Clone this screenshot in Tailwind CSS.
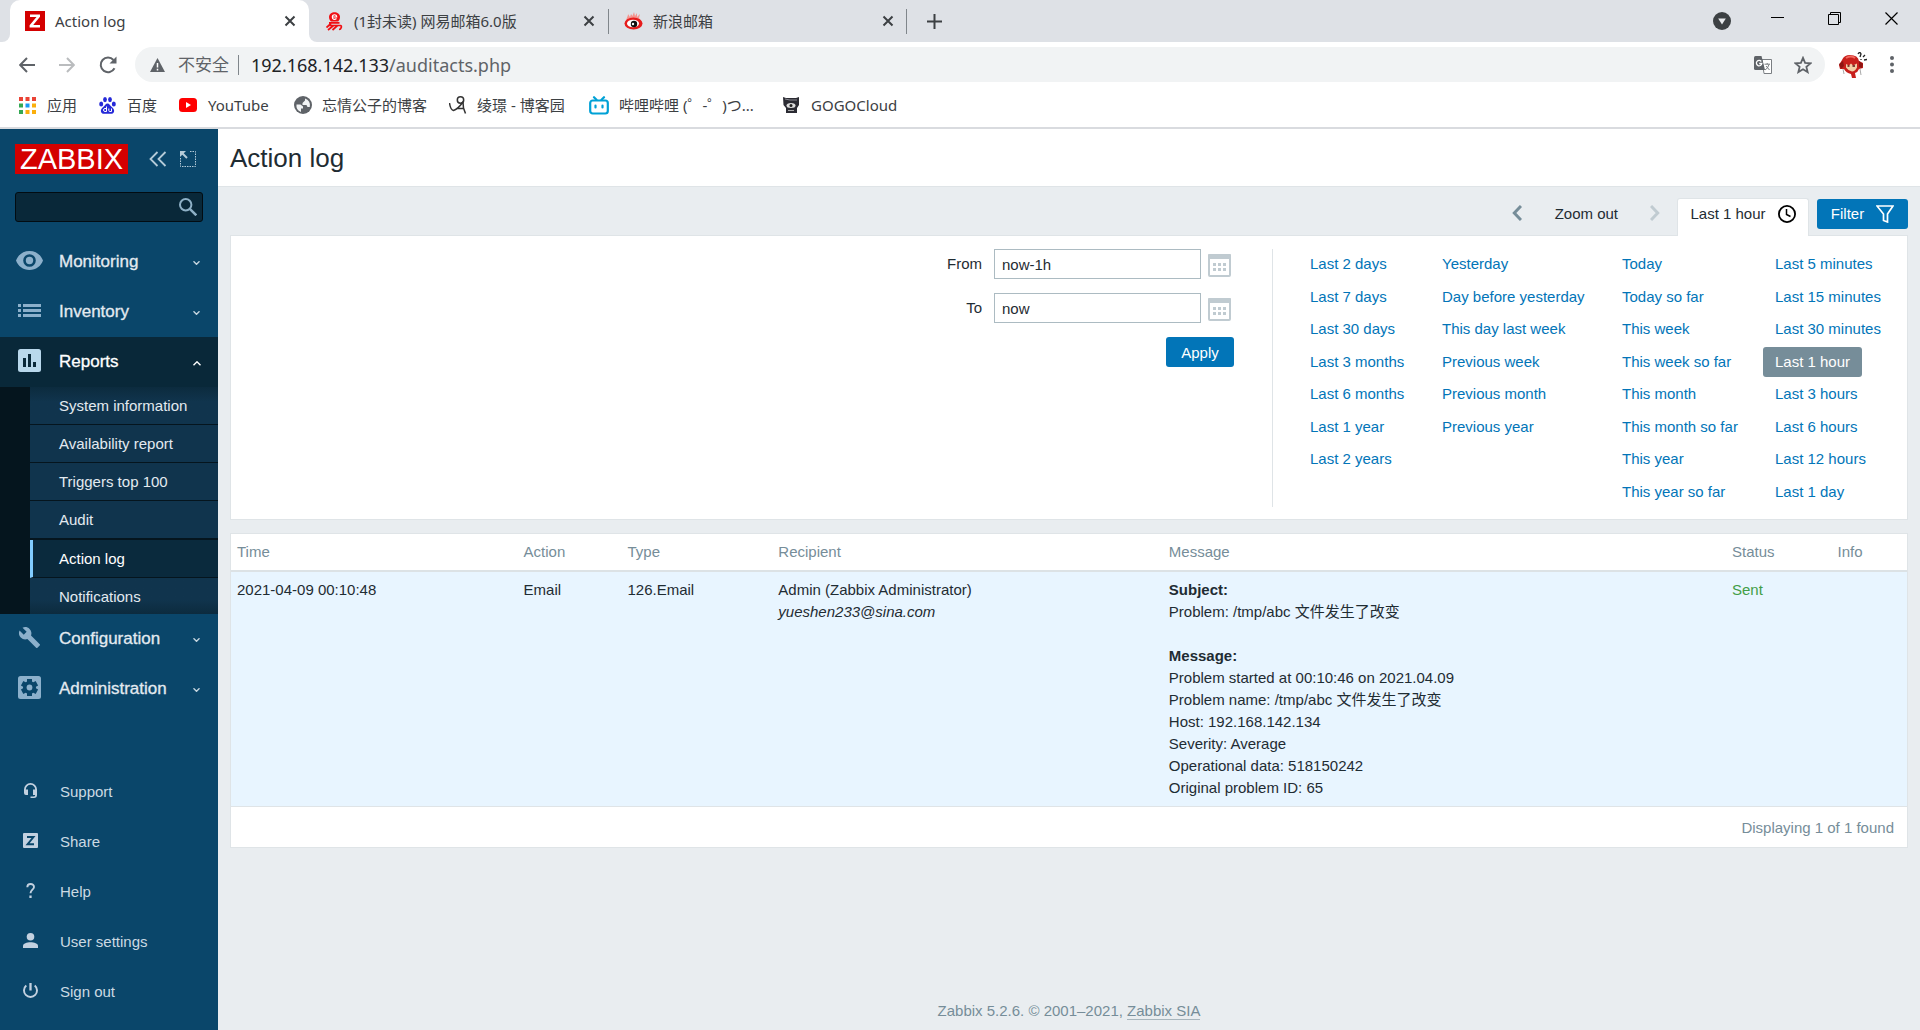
<!DOCTYPE html>
<html lang="zh-CN">

<head>
    <meta charset="UTF-8">
    <meta name="viewport" content="width=device-width, initial-scale=1.0">
    <title>Action log</title>
    <script src="https://cdn.jsdelivr.net/npm/@tailwindcss/browser@4"></script>
</head>

<body class="min-h-screen flex flex-col bg-[#e9edf0] text-[15px] text-[#1f2c33] font-['Liberation_Sans','Noto_Sans_CJK_SC',sans-serif]">

    <!-- Browser window -->
    <header class="text-[#3c4043] font-['Noto_Sans','Noto_Sans_CJK_SC',sans-serif] border-b-2 border-[#d9dbdf] bg-white">
        <div class="h-[42px] bg-[#dee1e6] flex items-start pl-[10px]">
            <div class="relative w-[299px] h-[42px] bg-white rounded-t-[10px] flex items-center pl-[15px] pr-[13px]">
                <span class="absolute -left-2 bottom-0 size-2 bg-white"><span class="block size-2 bg-[#dee1e6] rounded-br-lg"></span></span>
                <span class="absolute -right-2 bottom-0 size-2 bg-white"><span class="block size-2 bg-[#dee1e6] rounded-bl-lg"></span></span>
                <svg class="size-5 mr-[10px]" viewBox="0 0 20 20"><rect width="20" height="20" fill="#d40000"/><path d="M5 3.500h10v2.300L8.200 14H15v2.500H4.600v-2.300L11.500 6H5z" fill="#fff"/></svg>
                <span class="flex-1">Action log</span>
                <button aria-label="Close tab"><svg class="size-3" viewBox="0 0 12 12" stroke="#3c4043" stroke-width="2"><path d="M1.500 1.500l9 9M10.500 1.500l-9 9"/></svg></button>
            </div>
            <div class="w-[299px] h-[42px] flex items-center pl-[17px] pr-[13px]">
                <svg class="w-[17px] h-[19px] mr-[11px]" viewBox="0 0 17 19" fill="none" stroke="#f00f14">
                    <path d="M3 5C3-1.500 14-1.500 14 5c0 2-1 4-2 4.500H5C4 9 3 7 3 5z" fill="#f00f14" stroke="none"/>
                    <path d="M6.300 5h4.400c0-3-4.400-3-4.400 0s3 2.600 4.200 1.500" stroke="#fff" stroke-width="1.200"/>
                    <path d="M3 10.800h10.500M2 13.500h12.500c1.500 0 1 4-1.500 4M5 11.500L.5 15.500M7.500 13.500L2 18M11.500 13.500L6.500 18" stroke-width="1.700"/>
                </svg>
                <span class="flex-1">(1封未读) 网易邮箱6.0版</span>
                <button aria-label="Close tab"><svg class="size-3" viewBox="0 0 12 12" stroke="#3c4043" stroke-width="2"><path d="M1.500 1.500l9 9M10.500 1.500l-9 9"/></svg></button>
            </div>
            <div class="w-[299px] h-[42px] flex items-center relative pl-[16px] pr-[13px]">
                <span class="absolute left-0 top-[9px] h-[25px] w-px bg-[#80868b]"></span>
                <svg class="w-[19px] h-[18px] mr-[10px]" viewBox="0 0 19 18">
                    <path d="M2 9C3 5 4 4 4 2l2 3 1-3 1.500 2L10 0l1 4 2-3v4l3-3-1 4 2 3z" fill="#f5948f"/>
                    <ellipse cx="9.500" cy="11.500" rx="9" ry="6" fill="#e61c1c"/>
                    <ellipse cx="9" cy="11.500" rx="6" ry="3.800" fill="#fff"/>
                    <circle cx="10" cy="12" r="3.200" fill="#111"/><circle cx="9" cy="12" r="1.200" fill="#fff"/>
                </svg>
                <span class="flex-1">新浪邮箱</span>
                <button aria-label="Close tab"><svg class="size-3" viewBox="0 0 12 12" stroke="#3c4043" stroke-width="2"><path d="M1.500 1.500l9 9M10.500 1.500l-9 9"/></svg></button>
                <span class="absolute right-0 top-[9px] h-[25px] w-px bg-[#80868b]"></span>
            </div>
            <button aria-label="New tab" class="h-[42px] pl-5"><svg class="size-[15px]" viewBox="0 0 15 15" stroke="#3c4043" stroke-width="2"><path d="M7.500 0v15M0 7.500h15"/></svg></button>
            <div class="ml-auto flex h-[42px] items-start">
                <button aria-label="Tab search" class="h-[42px] mr-[18px]"><svg class="size-[18px]" viewBox="0 0 18 18"><circle cx="9" cy="9" r="9" fill="#3c4043"/><path d="M5.200 6.500h7.600L9 12.500z" fill="#e8eaed"/></svg></button>
                <button aria-label="Minimize" class="w-[57px] h-[37px] flex items-center justify-center"><svg class="size-[13px]" viewBox="0 0 13 13" stroke="#000"><path d="M0 5.500h13"/></svg></button>
                <button aria-label="Restore" class="w-[57px] h-[37px] flex items-center justify-center"><svg class="size-[13px]" viewBox="0 0 13 13" stroke="#000" fill="none"><path d="M.5 2.500h10v10H.5zM2.500 2.500V.5h10v10h-2"/></svg></button>
                <button aria-label="Close" class="w-[57px] h-[37px] flex items-center justify-center"><svg class="size-[13px]" viewBox="0 0 13 13" stroke="#000" stroke-width="1.200"><path d="M.5.5l12 12M12.500.5l-12 12"/></svg></button>
            </div>
        </div>

        <div class="h-[45px] flex items-center pl-[19px] pr-[26px]">
            <button aria-label="Back" class="mr-6"><svg class="size-4" viewBox="0 0 16 16" fill="none" stroke="#5f6368" stroke-width="2"><path d="M16 8H1.500M8 1L1.200 8 8 15"/></svg></button>
            <button aria-label="Forward" class="mr-6"><svg class="size-4" viewBox="0 0 16 16" fill="none" stroke="#babcbe" stroke-width="2"><path d="M0 8h14.500M8 1l6.800 7L8 15"/></svg></button>
            <button aria-label="Reload" class="mr-[18px]"><svg class="size-[18px]" viewBox="0 0 18 18" fill="none" stroke="#5f6368" stroke-width="2"><path d="M15.500 12.200A7.300 7.300 0 1 1 14.500 4"/><path d="M17.500.5v7h-7z" fill="#5f6368" stroke="none"/></svg></button>
            <div class="flex-1 h-[35px] rounded-full bg-[#f1f3f4] flex items-center pl-[15px] pr-[13px]">
                <svg class="w-[15px] h-[14px] mr-[13px]" viewBox="0 0 15 14"><path d="M7.500 0L15 14H0z" fill="#5f6368"/><path d="M7.500 5v4.500M7.500 10.800v1.700" stroke="#fff" stroke-width="1.500"/></svg>
                <span class="text-[17px] text-[#5f6368]">不安全</span>
                <span class="w-px h-5 bg-[#80868b] ml-[9px] mr-3"></span>
                <div role="textbox" aria-label="Address" contenteditable="true" spellcheck="false" class="flex-1 text-[18px] leading-6 text-[#202124]">192.168.142.133<span class="text-[#5f6368]">/auditacts.php</span></div>
                <button aria-label="Translate" class="mr-[22px]">
                    <svg class="size-[18px]" viewBox="0 0 18 18"><path d="M8 3.500h9.500v14H10z" fill="#fff" stroke="#7a7e82"/><path d="M0 1.500Q0 0 1.500 0h6L11 14H1.500Q0 14 0 12.500z" fill="#5f6368"/><path d="M7.300 5.500A2.700 2.700 0 1 0 7.800 7.500H5.200" fill="none" stroke="#fff" stroke-width="1.300"/><path d="M10.500 8.200H16M13.200 7v1.200M15 8.500q-1 4-4 5.500M12 10l3.500 4" fill="none" stroke="#7a7e82"/></svg>
                </button>
                <button aria-label="Bookmark"><svg class="size-[18px]" viewBox="0 0 24 24" fill="none" stroke="#5f6368" stroke-width="2.400"><path d="M12 2.500l2.800 6.700 7.200.6-5.500 4.700 1.700 7L12 17.700l-6.200 3.800 1.700-7L2 9.800l7.200-.6z"/></svg></button>
            </div>
            <button aria-label="Profile" class="ml-[14px] mr-[23px]">
                <svg class="w-7 h-[26px]" viewBox="0 0 28 26">
                    <path d="M3 8q2-5 8-5 8 0 9 6l4 2v5l-4 1q-1 3-4 4l1 5h-4l-1-4q-5-1-7-5l-4 0-1-4z" fill="#c8201c"/>
                    <path d="M0 12l4-3 1 5-3 3zM20 9l4 3-1 4-3-1z" fill="#8f1512"/>
                    <path d="M7 6q5-3 9 0" stroke="#f26a60" stroke-width="2" fill="none"/>
                    <path d="M7 12l3 1.500 2-2 2 2 4-2v4q-2 4-5 4-4-1-6-4z" fill="#f3cfa6"/>
                    <path d="M8.500 14h2M13.500 14h2.500" stroke="#5a1010" stroke-width="1.500"/>
                    <path d="M4 17l1 5M21 17l1 6" stroke="#aaa" fill="none"/>
                    <path d="M19 2q2-3 3 0l-1 3M24 5l2-2M25 8l3-.5M22 7v1" stroke="#222" stroke-width="1.300" fill="none"/>
                </svg>
            </button>
            <button aria-label="Menu"><svg class="w-1 h-[17px]" viewBox="0 0 4 17" fill="#5f6368"><circle cx="2" cy="2" r="2"/><circle cx="2" cy="8.500" r="2"/><circle cx="2" cy="15" r="2"/></svg></button>
        </div>

        <nav class="h-10 pb-1 pl-[19px] flex items-center gap-[22px]">
            <a href="#" class="flex items-center gap-[11px]">
                <svg class="size-[17px]" viewBox="0 0 17 17"><path d="M0 0h4v4H0zM6.500 0h4v4h-4zM13 0h4v4h-4z" fill="#ea4335"/><path d="M0 6.500h4v4H0zM0 13h4v4H0z" fill="#34a853"/><path d="M6.500 6.500h4v4h-4z" fill="#1a9af5"/><path d="M13 6.500h4v4h-4zM6.500 13h4v4h-4zM13 13h4v4h-4z" fill="#fbaf0c"/></svg>
                应用
            </a>
            <a href="#" class="flex items-center gap-[11px]">
                <svg class="size-[17px]" viewBox="0 0 17 17" fill="#2529d8"><ellipse cx="2.200" cy="7" rx="2" ry="2.500"/><ellipse cx="6" cy="2.600" rx="1.900" ry="2.600"/><ellipse cx="11" cy="2.600" rx="1.900" ry="2.600"/><ellipse cx="14.800" cy="7" rx="2" ry="2.500"/><path d="M8.500 6.500c2 0 2.500 2 4 3.200 2 1.500 3 3 2.500 5-.6 2.500-3 2.300-6.500 2-3.500.3-5.900.5-6.500-2-.5-2 .5-3.500 2.500-5 1.500-1.200 2-3.200 4-3.200z"/><path d="M7.500 9.500v5H6a1.300 1.300 0 0 1 0-3h1.500M9.800 11.500v2q0 1 1 1h1.700v-3" fill="none" stroke="#fff"/></svg>
                百度
            </a>
            <a href="#" class="min-w-[93px] flex items-center gap-[11px]">
                <svg class="w-[18px] h-[14px]" viewBox="0 0 18 14"><rect width="18" height="14" rx="3.500" fill="#f00"/><path d="M7 4l5 3-5 3z" fill="#fff"/></svg>
                YouTube
            </a>
            <a href="#" class="flex items-center gap-[10px]">
                <svg class="size-[18px]" viewBox="0 0 18 18"><circle cx="9" cy="9" r="9" fill="#5f6368"/><path d="M2.500 8.500h4l2.500 2v2H7v3.500A7 7 0 0 1 2.500 8.500zM11 2.500v2L8.500 7v2h4l1 2h2.300A7 7 0 0 0 11 2.500z" fill="#f1f3f4"/></svg>
                忘情公子的博客
            </a>
            <a href="#" class="min-w-[118px] flex items-center gap-[10px]">
                <svg class="size-[18px]" viewBox="0 0 18 18" fill="none" stroke="#333" stroke-width="1.500"><circle cx="11.500" cy="4" r="3.200"/><path d="M.5 7q1 7 4 7.500 4-1 9.500-8.500l.5 6 2 5.500M8 12.500h6"/></svg>
                绫璟 - 博客园
            </a>
            <a href="#" class="min-w-[171px] flex items-center gap-[10px]">
                <svg class="w-5 h-[19px]" viewBox="0 0 20 19" fill="none" stroke="#00a1d6" stroke-width="2.200" stroke-linecap="round"><rect x="1.200" y="4.500" width="17.600" height="13" rx="2.500"/><path d="M5 1.200l2.500 2.600M15 1.200l-2.500 2.600M6.500 9.500v2M13.500 9.500v2"/></svg>
                哔哩哔哩 (゜-゜)つ...
            </a>
            <a href="#" class="flex items-center gap-[11px]">
                <svg class="size-[18px]" viewBox="0 0 18 18"><path d="M1 1l3 1h10l3-1v8l-2 3v5H4v-5L1.500 9z" fill="#2b2b33"/><path d="M3 3l5 1h7" stroke="#8a8a92" fill="none"/><ellipse cx="9" cy="9.500" rx="4.500" ry="2.500" fill="#ddd"/><circle cx="9" cy="9.500" r="1.500" fill="#222"/><path d="M6 14.500h6" stroke="#aaa"/></svg>
                GOGOCloud
            </a>
        </nav>
    </header>

    <div class="flex-1 flex">
        <!-- Sidebar -->
        <aside class="w-[218px] shrink-0 bg-[#0a466a] text-[#e3eaf0] flex flex-col pb-[13px]">
            <div class="flex items-center pl-[15px] pt-[15px]">
                <a href="#" class="bg-[#d40000] text-white w-[113px] h-[30px] text-[29px] leading-[30px] text-center">ZABBIX</a>
                <button aria-label="Collapse sidebar" class="ml-[21px]"><svg class="w-[18px] h-4" viewBox="0 0 18 16" fill="none" stroke="#b5cbd8" stroke-width="1.800"><path d="M8.500 1l-7 7 7 7M16.500 1l-7 7 7 7"/></svg></button>
                <button aria-label="Hide sidebar" class="ml-[13px]"><svg class="size-4" viewBox="0 0 16 16" fill="none" stroke="#b5cbd8"><path d="M.5 7v8.500h15V.5H9" stroke-dasharray="1.500 1"/><path d="M1 1l6 6" stroke-width="2"/><path d="M0 0h6L0 6z" fill="#b5cbd8" stroke="none"/></svg></button>
            </div>
            <div class="relative mx-[15px] mt-[18px] mb-[15px]">
                <input type="text" aria-label="Search" class="block w-full h-[30px] rounded-[3px] bg-[#092839] border border-[#020c12] pl-2 pr-9">
                <button aria-label="Run search" class="absolute right-[6px] top-[6px]"><svg class="size-[18px]" viewBox="0 0 18 18" fill="none" stroke="#8eb0c6" stroke-width="2"><circle cx="6.700" cy="6.700" r="5.700"/><path d="M10.800 10.800l6.500 6.500" stroke-width="2.500"/></svg></button>
            </div>

            <nav>
                <a href="#" class="h-[50px] flex items-center pl-4 pr-[18px] text-[17px] [-webkit-text-stroke:0.3px]">
                    <svg class="w-[27px] h-5 mr-4 mb-[3px]" viewBox="0 0 27 20" fill="#8cb0cb"><path fill-rule="evenodd" d="M13.500 0C7 0 2 4 0 9.500 2 15 7 19 13.500 19S25 15 27 9.500C25 4 20 0 13.500 0zm0 15.800a6.300 6.300 0 1 1 0-12.600 6.300 6.300 0 0 1 0 12.600z"/><circle cx="13.500" cy="9.500" r="3.700"/></svg>
                    <span class="flex-1">Monitoring</span>
                    <svg class="w-[7px] h-1 mt-0.5" viewBox="0 0 7 4" fill="none" stroke="#c5d5df" stroke-width="1.400"><path d="M.5.300l3 3 3-3"/></svg>
                </a>
                <a href="#" class="h-[50px] flex items-center pl-[18px] pr-[18px] text-[17px] [-webkit-text-stroke:0.3px]">
                    <svg class="w-[23px] h-[13px] mr-[18px] mb-[3px]" viewBox="0 0 23 13" fill="#8cb0cb"><path d="M0 0h3v3H0zM5 0h18v3H5zM0 5h3v3H0zM5 5h18v3H5zM0 10h3v3H0zM5 10h18v3H5z"/></svg>
                    <span class="flex-1">Inventory</span>
                    <svg class="w-[7px] h-1 mt-0.5" viewBox="0 0 7 4" fill="none" stroke="#c5d5df" stroke-width="1.400"><path d="M.5.300l3 3 3-3"/></svg>
                </a>
                <a href="#" class="h-[50px] flex items-center pl-[18px] pr-[17px] text-[17px] text-white bg-[#092839] [-webkit-text-stroke:0.3px]">
                    <svg class="size-[23px] mr-[18px] mb-[3px]" viewBox="0 0 23 23"><rect width="23" height="23" rx="2.500" fill="#b9d8ec"/><path d="M5 9h3v9H5zM10 5h3v13h-3zM15 13h3v5h-3z" fill="#092839"/></svg>
                    <span class="flex-1">Reports</span>
                    <svg class="w-2 h-[5px] mt-0.5" viewBox="0 0 8 5" fill="none" stroke="#fff" stroke-width="1.400"><path d="M.5 4.200l3.500-3.400 3.500 3.400"/></svg>
                </a>
                <div class="bg-[#05151e] pl-[30px]">
                    <a href="#" class="h-[38px] flex items-center pt-0.5 pl-[29px] bg-linear-to-b from-[#0c2b3e] to-[#10344d] to-40% border-b border-[#05151e]">System information</a>
                    <a href="#" class="h-[38px] flex items-center pt-0.5 pl-[29px] bg-[#10344d] border-b border-[#05151e]">Availability report</a>
                    <a href="#" class="h-[38px] flex items-center pt-0.5 pl-[29px] bg-[#10344d] border-b border-[#05151e]">Triggers top 100</a>
                    <a href="#" class="h-[39px] flex items-center pt-0.5 pl-[29px] bg-[#10344d] border-b-2 border-[#05151e]">Audit</a>
                    <a href="#" class="h-[38px] flex items-center pt-0.5 pl-[26px] text-white bg-[#0a2a3d] border-l-[3px] border-l-[#81ccff] border-b border-b-[#05151e]">Action log</a>
                    <a href="#" class="h-9 flex items-center pt-0.5 pl-[29px] bg-linear-to-t from-[#0c2b3e] to-[#10344d] to-40%">Notifications</a>
                </div>
                <a href="#" class="h-[50px] flex items-center pl-[18px] pr-[18px] text-[17px] [-webkit-text-stroke:0.3px]">
                    <svg class="size-[23px] mr-[18px] mb-[3px]" viewBox="0 0 24 24" fill="#8cb0cb"><path d="M22.700 19l-9.100-9.100c.9-2.300.4-5-1.500-6.900-2-2-5-2.400-7.400-1.300L9 6 6 9 1.600 4.700C.4 7.100.9 10.100 2.900 12.100c1.900 1.900 4.600 2.400 6.900 1.500l9.100 9.100c.4.400 1 .4 1.400 0l2.300-2.300c.5-.4.500-1.100.1-1.400z"/></svg>
                    <span class="flex-1">Configuration</span>
                    <svg class="w-[7px] h-1 mt-0.5" viewBox="0 0 7 4" fill="none" stroke="#c5d5df" stroke-width="1.400"><path d="M.5.300l3 3 3-3"/></svg>
                </a>
                <a href="#" class="h-[50px] flex items-center pl-[18px] pr-[18px] text-[17px] [-webkit-text-stroke:0.3px]">
                    <svg class="size-[23px] mr-[18px] mb-[3px]" viewBox="0 0 23 23"><rect width="23" height="23" rx="2.500" fill="#8cb0cb"/><g fill="#0a466a"><circle cx="11.500" cy="11.500" r="6.500"/><path d="M9 3h5v17H9z"/><path d="M9 3h5v17H9z" transform="rotate(60 11.500 11.500)"/><path d="M9 3h5v17H9z" transform="rotate(120 11.500 11.500)"/></g><circle cx="11.500" cy="11.500" r="2.900" fill="#8cb0cb"/></svg>
                    <span class="flex-1">Administration</span>
                    <svg class="w-[7px] h-1 mt-0.5" viewBox="0 0 7 4" fill="none" stroke="#c5d5df" stroke-width="1.400"><path d="M.5.300l3 3 3-3"/></svg>
                </a>
            </nav>

            <nav class="mt-auto text-[#ccdae3]">
                <a href="#" class="h-[50px] flex items-center pl-[23px] gap-[22px]">
                    <svg class="size-[15px] mb-[3px]" viewBox="0 0 15 15" fill="#c3d1e0"><path d="M7.500 0A6.500 6.500 0 0 0 1 6.500V10q0 2 2 2h2V6.500H2.800a4.700 4.700 0 0 1 9.400 0H10V12h2.200q0 1.500-1.700 1.500H7.500V15H11q3 0 3-3V6.500A6.500 6.500 0 0 0 7.500 0z"/></svg>
                    Support
                </a>
                <a href="#" class="h-[50px] flex items-center pl-[23px] gap-[22px]">
                    <svg class="size-[15px] mb-[3px]" viewBox="0 0 15 15"><rect width="15" height="15" rx="1" fill="#c3d1e0"/><path d="M4 4h6.500L4.500 11.300H11" fill="none" stroke="#0a466a" stroke-width="1.900"/></svg>
                    Share
                </a>
                <a href="#" class="h-[50px] flex items-center pl-[23px] gap-[22px]">
                    <svg class="size-[15px] mb-[3px]" viewBox="0 0 15 15" fill="none" stroke="#c3d1e0" stroke-width="1.900"><path d="M4.300 4.300C4.300 0 11 0 11 4c0 2.500-3.500 3-3.500 6.300"/><path d="M7.500 12.500v2.500" stroke-width="2.300"/></svg>
                    Help
                </a>
                <a href="#" class="h-[50px] flex items-center pl-[23px] gap-[22px]">
                    <svg class="size-[15px] mb-[3px]" viewBox="0 0 15 15" fill="#c3d1e0"><circle cx="7.500" cy="3.800" r="3.800"/><path d="M0 15v-2c0-5 15-5 15 0v2z"/></svg>
                    User settings
                </a>
                <a href="#" class="h-[50px] flex items-center pl-[23px] gap-[22px]">
                    <svg class="size-[15px] mb-[3px]" viewBox="0 0 15 15" fill="none" stroke="#c3d1e0" stroke-width="1.900"><path d="M7.500 0v7.500" stroke-width="2.300"/><path d="M3.300 2.500a6.500 6.500 0 1 0 8.400 0"/></svg>
                    Sign out
                </a>
            </nav>
        </aside>

        <!-- Page -->
        <main class="flex-1 min-w-0 flex flex-col">
            <div class="h-[58px] bg-white border-b border-[#dfe4e7] px-3 pt-0.5 flex items-center">
                <h1 class="text-[26px]">Action log</h1>
            </div>

            <div class="px-3 pt-[11px]">
                <div class="flex justify-end items-start h-[37px]">
                    <button aria-label="Previous period" class="h-[30px] mr-[33px]"><svg class="w-[10px] h-4" viewBox="0 0 10 16" fill="none" stroke="#768d99" stroke-width="3"><path d="M9 1L2.300 8 9 15"/></svg></button>
                    <button class="h-[33px] mr-8">Zoom out</button>
                    <button aria-label="Next period" class="h-[30px] mr-[17px]"><svg class="w-[10px] h-4" viewBox="0 0 10 16" fill="none" stroke="#c0cbd1" stroke-width="3"><path d="M1 1l6.700 7L1 15"/></svg></button>
                    <button class="relative w-[132px] h-[38px] pb-[6px] bg-white border border-b-0 border-[#dfe4e7] rounded-t-[3px] flex items-center justify-center gap-3">
                        Last 1 hour
                        <svg class="size-[18px] mb-0.5" viewBox="0 0 18 18" fill="none" stroke="#000" stroke-width="1.800"><circle cx="9" cy="9" r="8.100"/><path d="M8.500 4v5.500l4 2" stroke-width="1.500"/></svg>
                    </button>
                    <button class="ml-2 mt-px w-[91px] h-[30px] bg-[#0275b8] text-white rounded-[3px] flex items-center justify-center gap-3">
                        Filter
                        <svg class="size-[18px]" viewBox="0 0 18 18" fill="none" stroke="#fff" stroke-width="1.700"><path d="M1 1h16l-5.500 8v8l-4-1.500V9z"/></svg>
                    </button>
                </div>

                <section class="bg-white border border-[#dfe4e7] pt-[13px] pb-3 flex justify-end">
                    <form class="flex flex-col items-end gap-[14px] pr-[38px]">
                        <div class="flex items-center pr-[3px]">
                            <label for="from" class="mr-3">From</label>
                            <input id="from" type="text" value="now-1h" class="w-[207px] h-[30px] border border-[#acbbc2] px-[7px] mr-[7px]">
                            <button type="button" aria-label="From calendar"><svg class="w-[23px] h-[23px] mt-[3px]" viewBox="0 0 23 23"><rect x="1" y="1" width="21" height="21" rx="1" fill="#fff" stroke="#c0cbd1" stroke-width="2"/><path d="M0 1q0-1 1-1h21q1 0 1 1v4H0z" fill="#c0cbd1"/><path d="M5 9h3v3H5zM10 9h3v3h-3zM15 9h3v3h-3zM5 14h3v3H5zM10 14h3v3h-3zM15 14h3v3h-3z" fill="#c0cbd1"/></svg></button>
                        </div>
                        <div class="flex items-center pr-[3px]">
                            <label for="to" class="mr-3">To</label>
                            <input id="to" type="text" value="now" class="w-[207px] h-[30px] border border-[#acbbc2] px-[7px] mr-[7px]">
                            <button type="button" aria-label="To calendar"><svg class="w-[23px] h-[23px] mt-[3px]" viewBox="0 0 23 23"><rect x="1" y="1" width="21" height="21" rx="1" fill="#fff" stroke="#c0cbd1" stroke-width="2"/><path d="M0 1q0-1 1-1h21q1 0 1 1v4H0z" fill="#c0cbd1"/><path d="M5 9h3v3H5zM10 9h3v3h-3zM15 9h3v3h-3zM5 14h3v3H5zM10 14h3v3h-3zM15 14h3v3h-3z" fill="#c0cbd1"/></svg></button>
                        </div>
                        <button type="button" class="w-[68px] h-[30px] pt-0.5 bg-[#0275b8] text-white rounded-[3px]">Apply</button>
                    </form>

                    <div class="flex border-l border-[#dfe4e7] pl-[25px] pr-[14px] text-[#0275b8]">
                        <div class="w-[132px] h-[258px] grid grid-rows-8 gap-y-0.5 items-center">
                            <a href="#" class="px-3">Last 2 days</a>
                            <a href="#" class="px-3">Last 7 days</a>
                            <a href="#" class="px-3">Last 30 days</a>
                            <a href="#" class="px-3">Last 3 months</a>
                            <a href="#" class="px-3">Last 6 months</a>
                            <a href="#" class="px-3">Last 1 year</a>
                            <a href="#" class="px-3">Last 2 years</a>
                        </div>
                        <div class="w-[180px] h-[258px] grid grid-rows-8 gap-y-0.5 items-center">
                            <a href="#" class="px-3">Yesterday</a>
                            <a href="#" class="px-3">Day before yesterday</a>
                            <a href="#" class="px-3">This day last week</a>
                            <a href="#" class="px-3">Previous week</a>
                            <a href="#" class="px-3">Previous month</a>
                            <a href="#" class="px-3">Previous year</a>
                        </div>
                        <div class="w-[153px] h-[258px] grid grid-rows-8 gap-y-0.5 items-center">
                            <a href="#" class="px-3">Today</a>
                            <a href="#" class="px-3">Today so far</a>
                            <a href="#" class="px-3">This week</a>
                            <a href="#" class="px-3">This week so far</a>
                            <a href="#" class="px-3">This month</a>
                            <a href="#" class="px-3">This month so far</a>
                            <a href="#" class="px-3">This year</a>
                            <a href="#" class="px-3">This year so far</a>
                        </div>
                        <div class="w-[130px] h-[258px] grid grid-rows-8 gap-y-0.5 items-center justify-items-start">
                            <a href="#" class="px-3">Last 5 minutes</a>
                            <a href="#" class="px-3">Last 15 minutes</a>
                            <a href="#" class="px-3">Last 30 minutes</a>
                            <a href="#" class="px-3 leading-[30px] bg-[#768d99] text-white rounded-[3px]">Last 1 hour</a>
                            <a href="#" class="px-3">Last 3 hours</a>
                            <a href="#" class="px-3">Last 6 hours</a>
                            <a href="#" class="px-3">Last 12 hours</a>
                            <a href="#" class="px-3">Last 1 day</a>
                        </div>
                    </div>
                </section>

                <section class="mt-[13px] bg-white border border-[#dfe4e7]">
                    <table class="w-full table-fixed text-left leading-[22px]">
                        <colgroup>
                            <col class="w-[17.1%]">
                            <col class="w-[6.2%]">
                            <col class="w-[9%]">
                            <col class="w-[23.3%]">
                            <col class="w-[33.6%]">
                            <col class="w-[6.3%]">
                            <col>
                        </colgroup>
                        <thead>
                            <tr class="border-b-2 border-[#dce2e5] text-[#768d99]">
                                <th class="font-normal px-[6px] py-[7px]">Time</th>
                                <th class="font-normal px-[6px] py-[7px]">Action</th>
                                <th class="font-normal px-[6px] py-[7px]">Type</th>
                                <th class="font-normal px-[6px] py-[7px]">Recipient</th>
                                <th class="font-normal px-[6px] py-[7px]">Message</th>
                                <th class="font-normal px-[6px] py-[7px]">Status</th>
                                <th class="font-normal px-[6px] py-[7px]">Info</th>
                            </tr>
                        </thead>
                        <tbody>
                            <tr class="align-top bg-[#e8f5ff] border-b border-[#dfe4e7]">
                                <td class="px-[6px] py-[7px]">2021-04-09 00:10:48</td>
                                <td class="px-[6px] py-[7px]">Email</td>
                                <td class="px-[6px] py-[7px]">126.Email</td>
                                <td class="px-[6px] py-[7px]">Admin (Zabbix Administrator)<br><em>yueshen233@sina.com</em></td>
                                <td class="px-[6px] py-[7px]">
                                    <b>Subject:</b><br>
                                    Problem: /tmp/abc 文件发生了改变<br>
                                    <br>
                                    <b>Message:</b><br>
                                    Problem started at 00:10:46 on 2021.04.09<br>
                                    Problem name: /tmp/abc 文件发生了改变<br>
                                    Host: 192.168.142.134<br>
                                    Severity: Average<br>
                                    Operational data: 518150242<br>
                                    Original problem ID: 65
                                </td>
                                <td class="px-[6px] py-[7px] text-[#429e47]">Sent</td>
                                <td></td>
                            </tr>
                        </tbody>
                    </table>
                    <div class="h-10 flex items-center justify-end pr-[13px] pt-0.5 text-[#768d99]">Displaying 1 of 1 found</div>
                </section>
            </div>

            <footer class="mt-auto pb-2 text-center text-[#768d99]">
                Zabbix 5.2.6. © 2001–2021, <a href="#" class="border-b border-[#a8b6bd]">Zabbix SIA</a>
            </footer>
        </main>
    </div>
</body>

</html>
